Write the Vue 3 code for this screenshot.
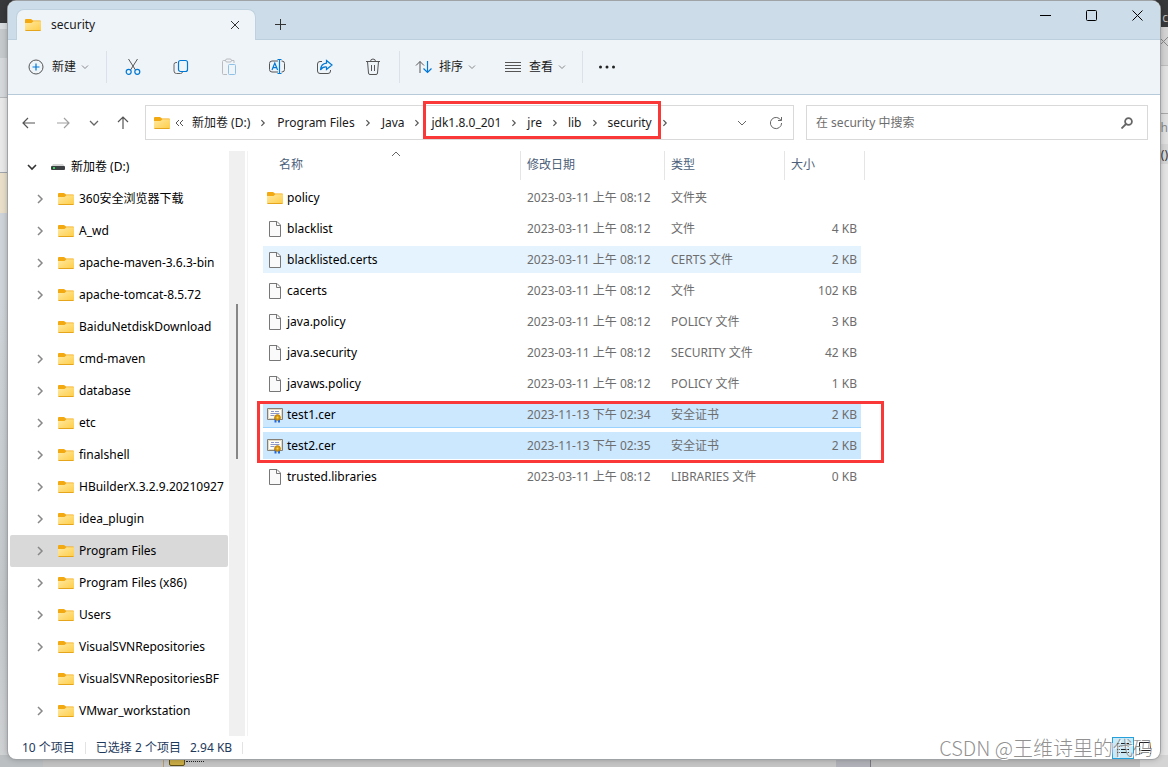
<script setup>
import { ref } from 'vue'

const query = ref('')

const parents = ['新加卷 (D:)', 'Program Files', 'Java']
const marked = ['jdk1.8.0_201', 'jre', 'lib', 'security']

const tree = [
  { name: '360安全浏览器下载', open: true },
  { name: 'A_wd', open: true },
  { name: 'apache-maven-3.6.3-bin', open: true },
  { name: 'apache-tomcat-8.5.72', open: true },
  { name: 'BaiduNetdiskDownload', open: false },
  { name: 'cmd-maven', open: true },
  { name: 'database', open: true },
  { name: 'etc', open: true },
  { name: 'finalshell', open: true },
  { name: 'HBuilderX.3.2.9.20210927', open: true },
  { name: 'idea_plugin', open: true },
  { name: 'Program Files', open: true, current: true },
  { name: 'Program Files (x86)', open: true },
  { name: 'Users', open: true },
  { name: 'VisualSVNRepositories', open: true },
  { name: 'VisualSVNRepositoriesBF', open: false },
  { name: 'VMwar_workstation', open: true },
]

const older = '2023-03-11 上午 08:12'
const files = [
  { name: 'policy', date: older, type: '文件夹', size: '', icon: 'folder' },
  { name: 'blacklist', date: older, type: '文件', size: '4 KB', icon: 'file' },
  { name: 'blacklisted.certs', date: older, type: 'CERTS 文件', size: '2 KB', icon: 'file', state: 'hover' },
  { name: 'cacerts', date: older, type: '文件', size: '102 KB', icon: 'file' },
  { name: 'java.policy', date: older, type: 'POLICY 文件', size: '3 KB', icon: 'file' },
  { name: 'java.security', date: older, type: 'SECURITY 文件', size: '42 KB', icon: 'file' },
  { name: 'javaws.policy', date: older, type: 'POLICY 文件', size: '1 KB', icon: 'file' },
  { name: 'test1.cer', date: '2023-11-13 下午 02:34', type: '安全证书', size: '2 KB', icon: 'cert', state: 'picked focused' },
  { name: 'test2.cer', date: '2023-11-13 下午 02:35', type: '安全证书', size: '2 KB', icon: 'cert', state: 'picked' },
  { name: 'trusted.libraries', date: older, type: 'LIBRARIES 文件', size: '0 KB', icon: 'file' },
]
</script>

<template>
  <div class="desktop">
    <!-- shared symbols -->
    <svg class="defs" aria-hidden="true">
      <linearGradient id="fold" x1="0" y1="0" x2="1" y2="1">
        <stop offset="0" stop-color="#ffe9a3" /><stop offset="1" stop-color="#ffcd45" />
      </linearGradient>
      <symbol id="folder" viewBox="0 0 16 14">
        <path d="M0 2a1 1 0 0 1 1-1h5l2 1.500h7a1 1 0 0 1 1 1V6H0z" fill="#f3a912" />
        <path d="M0 5h6.500l2-1.800H16V12a1 1 0 0 1-1 1H1a1 1 0 0 1-1-1z" fill="url(#fold)" />
        <path d="M0.500 12.500h15" stroke="#e5a51d" />
      </symbol>
      <symbol id="file" viewBox="0 0 16 16">
        <path d="M2.500 0.500h7.500l3.500 3.500v11.500h-11z" fill="#fafafa" stroke="#777" />
        <path d="M9.500 0.500v4h4" fill="none" stroke="#777" />
      </symbol>
      <symbol id="cert" viewBox="0 0 16 16">
        <path d="M0.500 1.500h15v11h-15z" fill="#fffdf5" stroke="#857f76" />
        <path d="M1.500 2.500h13v9h-13z" fill="none" stroke="#e3dac4" />
        <path d="M4 4.500h3m1 0h4M3.500 6.500h9M3.500 8.500h4" stroke="#8b97c8" />
        <path d="M8.500 11v4.500m3.500-4v4" stroke="#2269dd" stroke-width="2" />
        <circle cx="10.500" cy="10.500" r="2.800" fill="#d99b0c" stroke="#b77806" />
        <circle cx="10.500" cy="10.500" r="1" fill="#f6cf55" />
      </symbol>
      <symbol id="down" viewBox="0 0 10 10"><path d="M2 3.500l3 3 3-3" fill="none" stroke="currentColor" /></symbol>
      <symbol id="right" viewBox="0 0 10 10"><path d="M3 1.500l3.500 3.500L3 8.500" fill="none" stroke="currentColor" stroke-width="1.500" /></symbol>
    </svg>

    <!-- windows behind -->
    <div class="behind left" aria-hidden="true"></div>
    <div class="behind right" aria-hidden="true">
      <span class="bit c">c</span>
      <svg class="bit x" width="9" height="9" viewBox="0 0 9 9"><path d="M0 0l9 9M9 0L0 9" stroke="#888" /></svg>
      <span class="bit th">th</span>
      <span class="bit fn">i()</span>
    </div>
    <div class="behind bottom" aria-hidden="true"><i class="seal"></i></div>

    <main class="window">
      <header class="title">
        <div class="tab">
          <svg class="i16"><use href="#folder" /></svg>
          <span class="tab-name">security</span>
          <button class="close-tab" aria-label="关闭标签页">
            <svg width="10" height="10" viewBox="0 0 10 10"><path d="M1 1l8 8M9 1l-8 8" stroke="#333" /></svg>
          </button>
        </div>
        <button class="add" aria-label="新标签页">
          <svg width="11" height="11" viewBox="0 0 11 11"><path d="M5.500 0v11M0 5.500h11" stroke="#333" /></svg>
        </button>
        <div class="caption">
          <button aria-label="最小化"><svg width="11" height="11" viewBox="0 0 11 11"><path d="M0 5.500h11" stroke="#000" /></svg></button>
          <button aria-label="最大化"><svg width="11" height="11" viewBox="0 0 11 11"><rect x="0.500" y="0.500" width="10" height="10" rx="1" fill="none" stroke="#000" /></svg></button>
          <button aria-label="关闭"><svg width="11" height="11" viewBox="0 0 11 11"><path d="M0.500 0.500l10 10M10.500 0.500l-10 10" stroke="#000" /></svg></button>
        </div>
      </header>

      <div class="tools">
        <button class="wide new">
          <svg width="16" height="16" viewBox="0 0 16 16" fill="none"><circle cx="8" cy="8" r="7" stroke="#555" /><path d="M8 4.500v7M4.500 8h7" stroke="#0078d4" stroke-width="1.200" /></svg>
          <span>新建</span><svg class="chev"><use href="#down" /></svg>
        </button>
        <i class="sep"></i>
        <button class="tool" aria-label="剪切">
          <svg width="16" height="18" viewBox="0 0 16 18" fill="none"><path d="M3.500 1l7 11M12.500 1l-7 11" stroke="#555" /><circle cx="3.700" cy="13.800" r="2.500" stroke="#0078d4" stroke-width="1.200" /><circle cx="12.300" cy="13.800" r="2.500" stroke="#0078d4" stroke-width="1.200" /></svg>
        </button>
        <button class="tool" aria-label="复制">
          <svg width="16" height="16" viewBox="0 0 16 16" fill="none"><path d="M4 3.500H3a2 2 0 0 0-2 2V12a2.500 2.500 0 0 0 2.500 2.500h4A2 2 0 0 0 9.500 13" stroke="#666" /><rect x="5.500" y="1.500" width="9" height="11" rx="2" stroke="#0078d4" stroke-width="1.200" /></svg>
        </button>
        <button class="tool" aria-label="粘贴" disabled>
          <svg width="16" height="18" viewBox="0 0 16 18" fill="none"><path d="M5 2.500H2.500a1 1 0 0 0-1 1v12a1 1 0 0 0 1 1H6M10.500 2.500H13V5" stroke="#b9bcbf" /><rect x="4.500" y="1" width="6" height="3" rx="1.500" stroke="#b9bcbf" /><rect x="7.500" y="6.500" width="7" height="10" rx="1" stroke="#8fc0e6" /></svg>
        </button>
        <button class="tool" aria-label="重命名">
          <svg width="18" height="18" viewBox="0 0 18 18" fill="none"><path d="M10 3H4a2.500 2.500 0 0 0-2.500 2.500v6A2.500 2.500 0 0 0 4 14h6M13.500 3h.5a2.500 2.500 0 0 1 2.500 2.500v6A2.500 2.500 0 0 1 14 14h-.5" stroke="#555" /><path d="M4 12l2.800-7 2.800 7M5 9.700h3.600M9.500 1.500h4M11.500 1.500v14M9.500 15.500h4" stroke="#0078d4" stroke-width="1.200" /></svg>
        </button>
        <button class="tool" aria-label="共享">
          <svg width="18" height="16" viewBox="0 0 18 16" fill="none"><path d="M6 2.500H4A2.500 2.500 0 0 0 1.500 5v7A2.500 2.500 0 0 0 4 14.500h8a2.500 2.500 0 0 0 2.500-2.500v-1" stroke="#555" /><path d="M10.500 1.500l5.500 4.500-5.500 4.500V8C8 7.700 6 8.700 4.500 11c.3-4 2.500-6.500 6-6.800z" stroke="#0078d4" stroke-width="1.200" /></svg>
        </button>
        <button class="tool" aria-label="删除">
          <svg width="16" height="18" viewBox="0 0 16 18" fill="none" stroke="#555"><path d="M1 3.500h14M5.500 3.500a2.500 2.500 0 0 1 5 0M2.500 3.500l1 11.500a1.500 1.500 0 0 0 1.500 1.500h6a1.500 1.500 0 0 0 1.500-1.500l1-11.500M6.500 7v6M9.500 7v6" /></svg>
        </button>
        <i class="sep second"></i>
        <button class="wide sort">
          <svg width="18" height="14" viewBox="0 0 18 14" fill="none"><path d="M5 13V1.500M1 5.500l4-4 4 4" stroke="#555" /><path d="M12.500 1v11.500M8.500 8.500l4 4 4-4" stroke="#0078d4" stroke-width="1.200" /></svg>
          <span>排序</span><svg class="chev"><use href="#down" /></svg>
        </button>
        <button class="wide view">
          <svg width="16" height="12" viewBox="0 0 16 12"><path d="M0 1.500h16M0 4.500h16M0 7.500h16M0 10.500h16" stroke="#555" /></svg>
          <span>查看</span><svg class="chev"><use href="#down" /></svg>
        </button>
        <i class="sep"></i>
        <button class="tool dots" aria-label="更多">
          <svg width="18" height="4" viewBox="0 0 18 4" fill="#222"><circle cx="2.500" cy="2" r="1.500" /><circle cx="9" cy="2" r="1.500" /><circle cx="15.500" cy="2" r="1.500" /></svg>
        </button>
      </div>

      <div class="where">
        <div class="moves">
          <button aria-label="后退"><svg width="13" height="12" viewBox="0 0 13 12" fill="none" stroke="#555" stroke-width="1.200"><path d="M13 6H1M6 1L1 6l5 5" /></svg></button>
          <button aria-label="前进"><svg width="13" height="12" viewBox="0 0 13 12" fill="none" stroke="#a0a0a0" stroke-width="1.200"><path d="M0 6h12M7 1l5 5-5 5" /></svg></button>
          <button aria-label="最近位置" class="recent"><svg width="10" height="8" viewBox="0 0 10 8" fill="none" stroke="#666" stroke-width="1.300"><path d="M1 2l4 4 4-4" /></svg></button>
          <button aria-label="上移" class="up"><svg width="12" height="13" viewBox="0 0 12 13" fill="none" stroke="#555" stroke-width="1.200"><path d="M6 13V1M1 6l5-5 5 5" /></svg></button>
        </div>
        <nav class="address" aria-label="地址">
          <svg class="i16"><use href="#folder" /></svg>
          <svg class="more" width="9" height="8" viewBox="0 0 9 8" fill="none" stroke="#555"><path d="M4 1L1 4l3 3M8 1L5 4l3 3" /></svg>
          <template v-for="p in parents" :key="p">
            <button class="crumb">{{ p }}</button><svg class="step outer"><use href="#right" /></svg>
          </template>
          <span class="marked">
            <template v-for="(p, i) in marked" :key="p">
              <svg v-if="i" class="step"><use href="#right" /></svg><button class="crumb">{{ p }}</button>
            </template>
          </span>
          <svg class="step"><use href="#right" /></svg>
          <button class="drop" aria-label="历史记录"><svg width="10" height="8" viewBox="0 0 10 8" fill="none" stroke="#666"><path d="M1 2l4 4 4-4" /></svg></button>
          <button class="reload" aria-label="刷新"><svg width="14" height="14" viewBox="0 0 14 14" fill="none" stroke="#666"><path d="M12 4.500A5.600 5.600 0 1 0 12.600 7M12.500 1v3.500H9" /></svg></button>
        </nav>
        <label class="search">
          <input v-model="query" type="text" aria-label="搜索" placeholder="在 security 中搜索">
          <svg width="12" height="12" viewBox="0 0 12 12" fill="none" stroke="#666"><circle cx="7.500" cy="4.500" r="3.400" stroke-width="1.800" /><path d="M5 7L0.500 11.500" stroke-width="1.800" /></svg>
        </label>
      </div>

      <div class="body">
        <aside class="side">
          <ul class="tree">
            <li class="drive">
              <svg class="arrow" width="10" height="10" viewBox="0 0 10 10" fill="none" stroke="#333" stroke-width="1.600"><path d="M1 3l4 4 4-4" /></svg>
              <svg class="disk" width="14" height="8" viewBox="0 0 14 8"><path d="M2 1h10l2 3H0z" fill="#d5d5d5" /><rect y="3" width="14" height="4" rx="1" fill="#3d4043" /><rect x="2" y="4" width="2" height="2" fill="#36d257" /></svg>
              <span>新加卷 (D:)</span>
            </li>
            <li v-for="t in tree" :key="t.name" :class="{ current: t.current }">
              <svg class="arrow" width="10" height="10" viewBox="0 0 10 10"><path v-if="t.open" d="M3 1l4 4-4 4" fill="none" stroke="#888" stroke-width="1.500" /></svg>
              <svg class="i16"><use href="#folder" /></svg>
              <span>{{ t.name }}</span>
            </li>
          </ul>
          <div class="scroll"><i></i></div>
        </aside>

        <section class="pane">
          <div class="sheet">
            <svg class="asc" width="10" height="6" viewBox="0 0 10 6"><path d="M1 5l4-4 4 4" fill="none" stroke="#666" /></svg>
            <table>
              <colgroup><col class="c-name"><col class="c-date"><col class="c-type"><col class="c-size"><col class="c-end"></colgroup>
              <thead>
                <tr><th>名称</th><th>修改日期</th><th>类型</th><th colspan="2">大小</th></tr>
              </thead>
              <tbody>
                <tr v-for="f in files" :key="f.name" :class="f.state">
                  <td class="name"><span><svg :class="f.icon"><use :href="'#' + f.icon" /></svg>{{ f.name }}</span></td>
                  <td>{{ f.date }}</td>
                  <td>{{ f.type }}</td>
                  <td class="size">{{ f.size }}</td>
                  <td class="end"></td>
                </tr>
              </tbody>
            </table>
            <div class="frame"></div>
          </div>
        </section>
      </div>

      <footer class="status">
        <span>10 个项目</span><i></i><span>已选择 2 个项目</span><span class="sum">2.94 KB</span><i></i>
        <button class="mode on" aria-label="详细信息"><svg width="12" height="12" viewBox="0 0 12 12"><path d="M0 1.500h3m1 0h8M0 4.500h3m1 0h8M0 7.500h3m1 0h8M0 10.500h3m1 0h8" stroke="#222" /></svg></button>
        <button class="mode" aria-label="大图标"><svg width="12" height="12" viewBox="0 0 12 12"><path d="M0.500 0.500h11v8h-11zM0 11.500h12" fill="none" stroke="#222" /></svg></button>
        <div class="mark">CSDN @王维诗里的代码</div>
      </footer>
    </main>
  </div>
</template>

<style>
body { margin: 0; }
</style>

<style scoped>
.desktop {
  position: relative;
  box-sizing: border-box;
  min-height: 100vh;
  padding: 1px 8px 8px;
  display: flex;
  flex-direction: column;
  overflow: hidden;
  background: #4b4d51;
  color: #1a1a1a;
  font: 12px/16px "Noto Sans", "Noto Sans CJK SC", sans-serif;
}
.defs { position: absolute; width: 0; height: 0; }
button { display: inline-flex; align-items: center; justify-content: center; margin: 0; padding: 0; border: 0; background: none; color: inherit; font: inherit; }
svg { display: block; flex: none; }
.i16, .folder { width: 16px; height: 14px; }

.behind { position: absolute; }
.behind.left {
  left: 0; top: 0; bottom: 0; width: 12px;
  background: linear-gradient(#38393b 23px, #d9dcde 23px 29px, #c6c9cb 29px 58px, #d5d8da 58px 97px, #b5b8ba 97px 98px, #e8e8e8 98px 172px, #9fa5ab 172px 173px, #e9dfc9 173px 213px, #cdd3d8 213px 300px, #c3c7ca 600px, #d0d2d4);
}
.behind.right {
  right: 0; top: 0; bottom: 0; width: 12px;
  background: linear-gradient(#38393b 27px, #d3d3d3 27px 65px, #bdbdbd 65px 66px, #e2e2e2 66px 113px, #a8a8a8 113px 114px, #e0e0e0 114px 144px, #d5d5d5 144px 164px, #e4e4e4 164px);
}
.behind.bottom {
  left: 0; right: 0; bottom: 0; height: 12px;
  background: linear-gradient(90deg, #bbbfc2 43px, #c2c2c2 43px 163px, #b69c6e 163px 164px, #c4c4c4 164px 836px, #b0b0b8 836px 870px, #77777d 870px 871px, #bcbcbc 871px 1140px, #d4d4d4 1140px);
}
.seal { position: absolute; left: 169px; bottom: 1px; width: 14px; height: 9px; border: 1px solid #5d4e14; border-radius: 2px; background: #c9ab45; }
.seal::after { content: ""; position: absolute; left: 16px; top: 5px; width: 18px; border-top: 1px dotted #222; }
.bit { position: absolute; right: 0; line-height: 16px; color: #888; }
.bit.c { top: 10px; color: #bbb; }
.bit.x { top: 37px; }
.bit.th { top: 120px; }
.bit.fn { top: 147px; color: #333; }

.window {
  position: relative;
  flex: 1;
  display: flex;
  flex-direction: column;
  min-height: 0;
  border-radius: 8px;
  background: #fff;
  box-shadow: 0 0 0 1px #a0a3a6, 0 0 6px rgba(0, 0, 0, .3);
}

.title { display: flex; height: 39px; box-sizing: border-box; padding-left: 8px; border-radius: 8px 8px 0 0; background: #ccdde9; border-bottom: 1px solid #bccfdc; }
.tab { display: flex; align-items: center; box-sizing: border-box; width: 240px; height: 31px; margin-top: 8px; padding: 0 10px 0 8px; border: 1px solid #bfd1de; border-bottom: 0; border-radius: 8px 8px 0 0; background: #eff4f9; }
.tab-name { flex: 1; margin-left: 10px; }
.close-tab { width: 20px; height: 20px; }
.add { width: 32px; height: 32px; margin: 7px 0 0 8px; }
.caption { display: flex; margin-left: auto; }
.caption button { width: 46px; height: 28px; }

.tools { display: flex; align-items: center; height: 55px; box-sizing: border-box; background: #eff4f9; border-bottom: 1px solid #b7cad9; }
.tool { width: 48px; height: 36px; }
.wide { height: 36px; }
.wide span { margin-left: 8px; }
.new { width: 98px; box-sizing: border-box; padding-left: 4px; }
.sort { width: 88px; margin-left: 1px; }
.sort span { margin-left: 6px; }
.view { width: 92px; }
.chev { width: 10px; height: 10px; margin-left: 4px; color: #888; }
.sep { width: 1px; height: 32px; margin: 0 1px 0 0; background: #dbe1e6; }
.sep.second { margin-left: 2px; }
.sep + .tool { margin-left: 1px; }
.tool.dots { width: 44px; }

.where { display: grid; grid-template-columns: 132px minmax(0, 649fr) minmax(0, 354fr); padding: 10px 12px 11px 5px; }
.moves { display: flex; margin-left: -2px; }
.moves button { width: 35px; }
.moves .recent { width: 26px; }
.moves .up { width: 32px; }
.address { display: flex; align-items: center; box-sizing: border-box; height: 35px; padding: 0 7px 0 8px; border: 1px solid #d9d9d9; }
.more { margin: 0 8px 0 5px; }
.crumb { white-space: nowrap; }
.step { width: 10px; height: 8px; margin: 0 8px; color: #555; }
.step.outer { margin-right: 9px; }
.marked { position: relative; display: flex; align-items: center; height: 33px; }
.marked::after { content: ""; position: absolute; inset: -5px -9px 0 -8px; border: 3px solid #fb3838; pointer-events: none; }
.address .drop { width: 24px; height: 24px; margin-left: auto; }
.address .reload { width: 20px; height: 24px; margin-left: 12px; }
.search { display: flex; align-items: center; box-sizing: border-box; height: 35px; margin-left: 12px; padding: 0 14px 0 9px; border: 1px solid #d9d9d9; }
.search input { flex: 1; min-width: 0; padding: 0; border: 0; outline: 0; background: none; font: inherit; }
.search input::placeholder { color: #6d6d6d; opacity: 1; }

.body { display: flex; flex: 1; min-height: 0; }
.side { display: flex; flex: none; width: 240px; box-sizing: border-box; border-right: 1px solid #f3f3f3; overflow: hidden; }
.tree { flex: 1; margin: 0; padding: 0 1px 0 2px; list-style: none; color: #000; }
.tree li { display: flex; align-items: center; height: 32px; padding-left: 25px; border-radius: 2px; white-space: nowrap; }
.tree .arrow { margin-right: 13px; }
.tree span { margin-left: 5px; }
.tree .drive { padding-left: 17px; }
.drive .arrow { margin-right: 14px; }
.drive .disk { margin-right: 1px; }
.tree .current { background: #d9d9d9; }
.scroll { width: 16px; margin-right: 2px; background: #f0f0f0; display: flex; justify-content: center; }
.scroll i { width: 2px; height: 155px; margin-top: 153px; background: #868686; }

.pane { flex: 1; min-width: 0; overflow: hidden; padding-left: 15px; }
.sheet { display: flow-root; position: relative; width: 602px; }
.asc { position: absolute; left: 128px; top: 0; }
table { width: 602px; table-layout: fixed; border-collapse: separate; border-spacing: 0 4px; margin-top: -4px; }
.c-name { width: 258px; }
.c-date { width: 144px; }
.c-type { width: 120px; }
.c-size { width: 76px; }
.c-end { width: 4px; }
th { height: 29px; box-sizing: border-box; padding: 0 0 2px 6px; border-right: 1px solid #e5e5e5; color: #4c607a; font-weight: 400; text-align: left; }
th:first-child { padding-left: 16px; }
td { height: 27px; padding: 0 0 0 6px; color: #6d6d6d; white-space: nowrap; }
td.name { padding-left: 4px; color: #000; }
.name span { display: flex; align-items: center; }
.name svg { margin-right: 4px; }
.file, .cert { width: 16px; height: 16px; }
td.size { padding: 0 4px 0 0; text-align: right; }
td.end { padding: 0; }
.hover td:not(.end) { background: #e5f3ff; }
.picked td:not(.end) { background: #cce8ff; }
.focused td:not(.end) { box-shadow: inset 0 -1px #99d1ff; }
.frame { position: absolute; left: -6px; right: -19px; top: 250px; height: 56px; border: 3px solid #fb3838; pointer-events: none; }

.status { position: relative; display: flex; align-items: center; height: 23px; padding: 0 4px 0 14px; color: #1e395b; }
.status i { width: 1px; height: 12px; margin: 0 10px; background: #e3e3e3; }
.status .sum { margin-left: 9px; }
.mode { width: 22px; height: 22px; box-sizing: border-box; border: 1px solid transparent; }
.mode.on { margin-left: auto; border-color: #26a0da; background: #cbe8f6; }
.mark { position: absolute; right: 7px; bottom: -1px; font: 300 20px/24px "Noto Sans CJK SC", sans-serif; color: rgba(125, 125, 125, .85); text-shadow: 1px 1px #fff; white-space: nowrap; }
</style>
